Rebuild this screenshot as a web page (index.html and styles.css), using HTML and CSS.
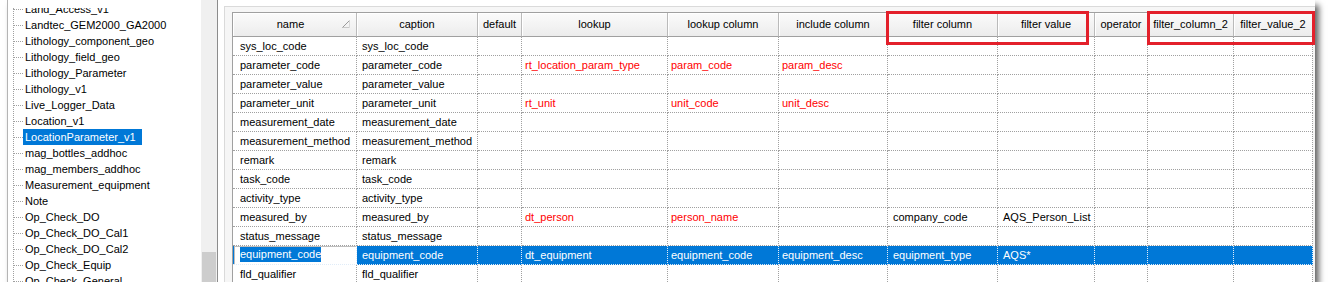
FILE: index.html
```html
<!DOCTYPE html>
<html lang="en">
<head>
  <meta charset="UTF-8" />
  <title>Table Column Settings</title>
  <link rel="stylesheet" href="styles.css">
</head>
<body>
  <div class="shot">
    <div class="tree">
      <div class="tree-view">
        <div class="tree-list">
          <div class="tree-clip">
            <div class="node first"><span class="label">Land_Access_v1</span></div>
            <div class="node"><span class="label">Landtec_GEM2000_GA2000</span></div>
            <div class="node"><span class="label">Lithology_component_geo</span></div>
            <div class="node"><span class="label">Lithology_field_geo</span></div>
            <div class="node"><span class="label">Lithology_Parameter</span></div>
            <div class="node"><span class="label">Lithology_v1</span></div>
            <div class="node"><span class="label">Live_Logger_Data</span></div>
            <div class="node"><span class="label">Location_v1</span></div>
            <div class="node"><span class="label selected">LocationParameter_v1</span></div>
            <div class="node"><span class="label">mag_bottles_addhoc</span></div>
            <div class="node"><span class="label">mag_members_addhoc</span></div>
            <div class="node"><span class="label">Measurement_equipment</span></div>
            <div class="node"><span class="label">Note</span></div>
            <div class="node"><span class="label">Op_Check_DO</span></div>
            <div class="node"><span class="label">Op_Check_DO_Cal1</span></div>
            <div class="node"><span class="label">Op_Check_DO_Cal2</span></div>
            <div class="node"><span class="label">Op_Check_Equip</span></div>
            <div class="node"><span class="label">Op_Check_General</span></div>
          </div>
        </div>
      </div>
      <div class="vscroll"><div class="thumb"></div></div>
    </div>

    <div class="editor">
      <div class="frame">
        <div class="grid">
          <div class="row head">
            <div class="h sorted">name
              <svg class="sort" width="8" height="8" viewBox="0 0 8 8"><path d="M7.5 7.5H0.5" stroke="#c8c8c8" fill="none"/><path d="M7.5 0.5L0.5 7.5" stroke="#9a9a9a" fill="none"/><path d="M7.5 0.5V7.5" stroke="#d8d8d8" fill="none"/></svg>
            </div>
            <div class="h">caption</div>
            <div class="h">default</div>
            <div class="h">lookup</div>
            <div class="h">lookup column</div>
            <div class="h">include column</div>
            <div class="h">filter column</div>
            <div class="h">filter value</div>
            <div class="h">operator</div>
            <div class="h">filter_column_2</div>
            <div class="h">filter_value_2</div>
          </div>

          <div class="row">
            <div class="c">sys_loc_code</div><div class="c">sys_loc_code</div><div class="c"></div>
            <div class="c"></div><div class="c"></div><div class="c"></div>
            <div class="c"></div><div class="c"></div><div class="c"></div><div class="c"></div><div class="c"></div>
          </div>
          <div class="row">
            <div class="c">parameter_code</div><div class="c">parameter_code</div><div class="c"></div>
            <div class="c lk">rt_location_param_type</div><div class="c lk">param_code</div><div class="c lk">param_desc</div>
            <div class="c"></div><div class="c"></div><div class="c"></div><div class="c"></div><div class="c"></div>
          </div>
          <div class="row">
            <div class="c">parameter_value</div><div class="c">parameter_value</div><div class="c"></div>
            <div class="c"></div><div class="c"></div><div class="c"></div>
            <div class="c"></div><div class="c"></div><div class="c"></div><div class="c"></div><div class="c"></div>
          </div>
          <div class="row">
            <div class="c">parameter_unit</div><div class="c">parameter_unit</div><div class="c"></div>
            <div class="c lk">rt_unit</div><div class="c lk">unit_code</div><div class="c lk">unit_desc</div>
            <div class="c"></div><div class="c"></div><div class="c"></div><div class="c"></div><div class="c"></div>
          </div>
          <div class="row">
            <div class="c">measurement_date</div><div class="c">measurement_date</div><div class="c"></div>
            <div class="c"></div><div class="c"></div><div class="c"></div>
            <div class="c"></div><div class="c"></div><div class="c"></div><div class="c"></div><div class="c"></div>
          </div>
          <div class="row">
            <div class="c">measurement_method</div><div class="c">measurement_method</div><div class="c"></div>
            <div class="c"></div><div class="c"></div><div class="c"></div>
            <div class="c"></div><div class="c"></div><div class="c"></div><div class="c"></div><div class="c"></div>
          </div>
          <div class="row">
            <div class="c">remark</div><div class="c">remark</div><div class="c"></div>
            <div class="c"></div><div class="c"></div><div class="c"></div>
            <div class="c"></div><div class="c"></div><div class="c"></div><div class="c"></div><div class="c"></div>
          </div>
          <div class="row">
            <div class="c">task_code</div><div class="c">task_code</div><div class="c"></div>
            <div class="c"></div><div class="c"></div><div class="c"></div>
            <div class="c"></div><div class="c"></div><div class="c"></div><div class="c"></div><div class="c"></div>
          </div>
          <div class="row">
            <div class="c">activity_type</div><div class="c">activity_type</div><div class="c"></div>
            <div class="c"></div><div class="c"></div><div class="c"></div>
            <div class="c"></div><div class="c"></div><div class="c"></div><div class="c"></div><div class="c"></div>
          </div>
          <div class="row">
            <div class="c">measured_by</div><div class="c">measured_by</div><div class="c"></div>
            <div class="c lk">dt_person</div><div class="c lk">person_name</div><div class="c"></div>
            <div class="c">company_code</div><div class="c">AQS_Person_List</div><div class="c"></div><div class="c"></div><div class="c"></div>
          </div>
          <div class="row">
            <div class="c">status_message</div><div class="c">status_message</div><div class="c"></div>
            <div class="c"></div><div class="c"></div><div class="c"></div>
            <div class="c"></div><div class="c"></div><div class="c"></div><div class="c"></div><div class="c"></div>
          </div>
          <div class="row sel">
            <div class="c edit"><div class="edit-box"><span class="hl">equipment_code</span></div></div>
            <div class="c">equipment_code</div><div class="c"></div>
            <div class="c">dt_equipment</div><div class="c">equipment_code</div><div class="c">equipment_desc</div>
            <div class="c">equipment_type</div><div class="c">AQS*</div><div class="c"></div><div class="c"></div><div class="c"></div>
          </div>
          <div class="row">
            <div class="c">fld_qualifier</div><div class="c">fld_qualifier</div><div class="c"></div>
            <div class="c"></div><div class="c"></div><div class="c"></div>
            <div class="c"></div><div class="c"></div><div class="c"></div><div class="c"></div><div class="c"></div>
          </div>
        </div>
      </div>
    </div>

    <!-- annotation boxes drawn over the header -->
    <div class="mark mark-filter"></div>
    <div class="mark mark-filter2"></div>
  </div>
</body>
</html>
```

FILE: styles.css
```css
body {
  margin: 0;
  background: #fff;
  font-family: "Liberation Sans", Arial, sans-serif;
  font-size: 11px;
  color: #000;
}
.shot {
  position: relative;
  display: flex;
  width: 1308px;
  height: 282px;
  margin-left: 7px;
  overflow: hidden;
  background: #fff;
  box-shadow: 4px 5px 6px rgba(0, 0, 0, 0.6);
}

/* left tree */
.tree {
  display: flex;
  width: 211px;
  flex: none;
  box-sizing: border-box;
  border-left: 1px solid #b4b4b4;
  border-right: 1px solid #8c8c8c;
}
.tree-view {
  flex: 1;
  background: #fff;
  overflow: hidden;
}
.tree-list {
  height: 100%;
  margin-left: 5px;
  border-left: 1px dotted #a0a0a0;
}
.tree-clip {
  height: calc(100% - 8px);
  margin-top: 8px;
  overflow: hidden;
}
.node {
  display: flex;
  align-items: center;
  height: 16px;
  white-space: nowrap;
}
.node.first {
  margin-top: -7px;
}
.node::before {
  content: "";
  width: 9px;
  border-top: 1px dotted #a0a0a0;
}
.label {
  height: 16px;
  line-height: 16px;
  padding: 0 6px 0 2px;
}
.label.selected {
  background: #0078d7;
  color: #fff;
}
.vscroll {
  display: flex;
  flex-direction: column;
  width: 16px;
  background: #f0f0f0;
}
.thumb {
  margin: auto 1px 0;
  height: 30px;
  background: #cdcdcd;
}

/* right editor */
.editor {
  flex: 1;
  padding: 6px 0 0 6px;
  background: #fff;
}
.frame {
  height: 100%;
  padding: 5px 0 0 7px;
  border-top: 1px solid #dadada;
  border-left: 1px solid #dadada;
  background: #f6f6f6;
}
.grid {
  width: 1081px;
  height: 100%;
  box-sizing: border-box;
  border-top: 1px solid #a0a0a0;
  border-left: 1px solid #a0a0a0;
  background: #fff;
}
.row {
  display: grid;
  grid-template-columns: 124px 121px 44px 146px 111px 109px 110px 97px 53px 86px 79px;
}
.c {
  box-sizing: border-box;
  height: 19px;
  line-height: 18px;
  padding: 0 0 0 5px;
  border-right: 1px dotted #a0a0a0;
  border-bottom: 1px dotted #a0a0a0;
  white-space: nowrap;
  overflow: hidden;
}
.c:nth-child(1) {
  padding-left: 7px;
}
.c:nth-child(4),
.c:nth-child(5),
.c:nth-child(6) {
  padding-left: 3px;
}
.lk {
  color: #ff0000;
}
.h {
  position: relative;
  box-sizing: border-box;
  height: 24px;
  line-height: 23px;
  text-align: center;
  white-space: nowrap;
  overflow: hidden;
  background: linear-gradient(#fbfbfb, #ececec);
  border-right: 1px solid #bababa;
  border-bottom: 1px solid #a0a0a0;
  box-shadow: inset 1px 1px 0 #fff;
}
.h.sorted {
  padding-right: 8px;
}
.sort {
  position: absolute;
  top: 7px;
  right: 6px;
}

/* selected row */
.sel .c {
  background: #0078d7;
  color: #fff;
  border-right-color: #e0ecf8;
  border-bottom-color: #e0ecf8;
}
.sel .c.edit {
  padding: 0;
  background: #fff;
  box-shadow: inset 1px 0 0 #0078d7;
}
.edit-box {
  box-sizing: border-box;
  height: 19px;
  margin-left: 1px;
  padding-left: 5px;
  border: 1px solid #bdbdbd;
  border-right: 0;
  line-height: 16px;
}
.hl {
  display: inline-block;
  vertical-align: top;
  line-height: 15px;
  background: #0078d7;
  color: #fff;
}

/* red annotation boxes */
.mark {
  position: absolute;
  top: 11px;
  height: 34px;
  box-sizing: border-box;
  border: 3px solid #e3202b;
}
.mark-filter {
  left: 879px;
  width: 203px;
}
.mark-filter2 {
  left: 1140px;
  width: 168px;
}
```
